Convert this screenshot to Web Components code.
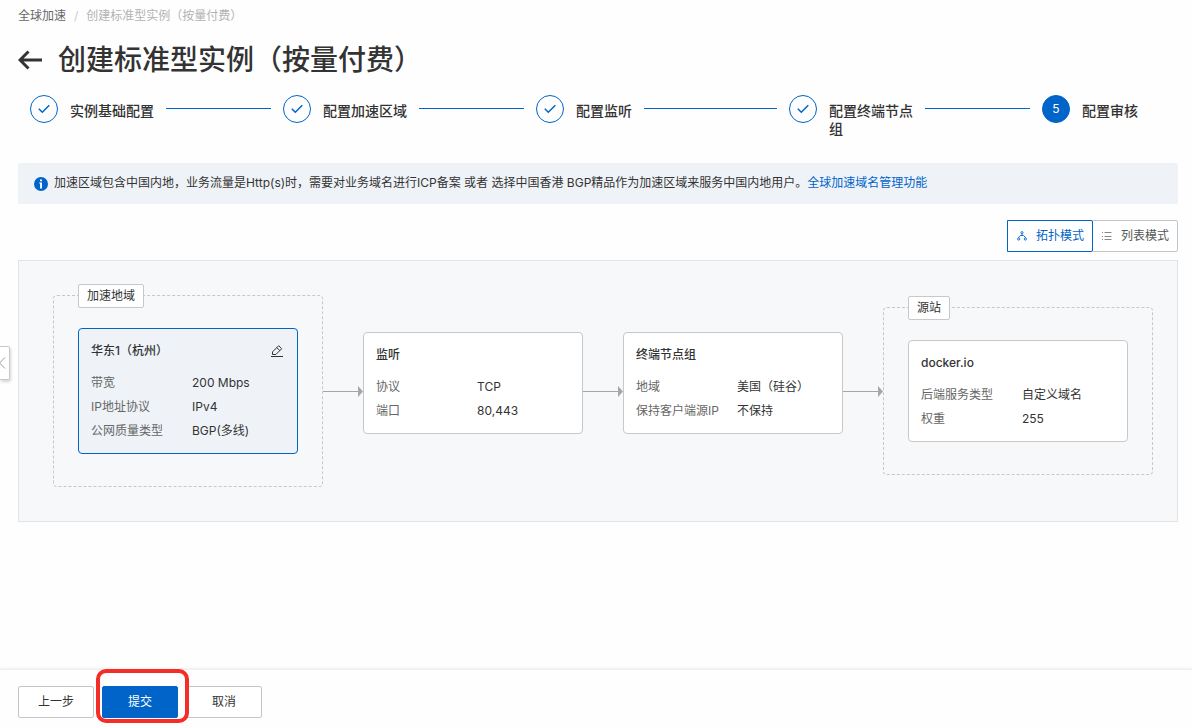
<!DOCTYPE html>
<html lang="zh-CN">
<head>
<meta charset="utf-8">
<meta name="viewport" content="width=device-width, initial-scale=1">
<title>创建标准型实例（按量付费）</title>
<style>
    body {
        margin: 0;
        background: #fefefe;
        color: #333;
        font: 12px/20px Inter, "Noto Sans CJK SC", sans-serif;
    }
</style>
</head>
<body>
<ga-page>
    <ga-breadcrumb slot="header" parent="全球加速" current="创建标准型实例（按量付费）"></ga-breadcrumb>
    <ga-title slot="header">创建标准型实例（按量付费）</ga-title>

    <ga-steps>
        <ga-step state="done">实例基础配置</ga-step>
        <ga-step state="done">配置加速区域</ga-step>
        <ga-step state="done">配置监听</ga-step>
        <ga-step state="done">配置终端节点组</ga-step>
        <ga-step state="current" number="5">配置审核</ga-step>
    </ga-steps>

    <ga-notice href="#domains" link="全球加速域名管理功能">加速区域包含中国内地，业务流量是Http(s)时，需要对业务域名进行ICP备案 或者 选择中国香港 BGP精品作为加速区域来服务中国内地用户。</ga-notice>

    <ga-mode-switch></ga-mode-switch>

    <ga-topology>
        <ga-group label="加速地域">
            <ga-card heading="华东1（杭州）" selected editable>
                <ga-field label="带宽">200 Mbps</ga-field>
                <ga-field label="IP地址协议">IPv4</ga-field>
                <ga-field label="公网质量类型">BGP(多线)</ga-field>
            </ga-card>
        </ga-group>
        <ga-arrow></ga-arrow>
        <ga-card class="node" heading="监听">
            <ga-field label="协议">TCP</ga-field>
            <ga-field label="端口">80,443</ga-field>
        </ga-card>
        <ga-arrow></ga-arrow>
        <ga-card class="node" heading="终端节点组">
            <ga-field label="地域">美国（硅谷）</ga-field>
            <ga-field label="保持客户端源IP">不保持</ga-field>
        </ga-card>
        <ga-arrow></ga-arrow>
        <ga-group label="源站">
            <ga-card heading="docker.io">
                <ga-field label="后端服务类型">自定义域名</ga-field>
                <ga-field label="权重">255</ga-field>
            </ga-card>
        </ga-group>
    </ga-topology>

    <ga-button slot="footer">上一步</ga-button>
    <ga-button slot="footer" primary marked>提交</ga-button>
    <ga-button slot="footer">取消</ga-button>
</ga-page>
<ga-drawer-handle></ga-drawer-handle>

<script>
// attaches an open shadow root filled from a html string
class GaElement extends HTMLElement {
    constructor() {
        super();
        const template = document.createElement('template');
        template.innerHTML = this.constructor.html;
        this._root = this.attachShadow({mode: 'open'});
        this._root.appendChild(template.content.cloneNode(true));
    }

    $(selector) {
        return this._root.querySelector(selector);
    }
}

class GaPage extends GaElement {
    static html = `
        <style>
            :host {
                display: flex;
                flex-direction: column;
                min-height: 100vh;
            }
            header, main { padding: 0 14px 0 18px; }
            header { padding-top: 6px; }
            main { flex: 1; padding-bottom: 24px; }
            footer {
                position: sticky;
                bottom: 0;
                display: flex;
                gap: 8px;
                padding: 16px 18px 10px;
                background: #fefefe;
                border-top: 1px solid #eee;
                box-shadow: 0 -1px 2px rgba(0, 0, 0, .06);
            }
        </style>
        <header><slot name="header"></slot></header>
        <main><slot></slot></main>
        <footer><slot name="footer"></slot></footer>
    `;
}

class GaBreadcrumb extends GaElement {
    static html = `
        <style>
            :host { display: block; }
            nav { display: flex; gap: 8px; color: #b3b3b3; }
            a { color: #666; text-decoration: none; }
            .sep { color: #ccc; }
        </style>
        <nav aria-label="breadcrumb">
            <a href="#home"></a><span class="sep">/</span><span class="current"></span>
        </nav>
    `;

    connectedCallback() {
        this.$('a').textContent = this.getAttribute('parent');
        this.$('.current').textContent = this.getAttribute('current');
    }
}

class GaTitle extends GaElement {
    static html = `
        <style>
            :host {
                display: flex;
                align-items: center;
                gap: 16px;
                padding: 14px 0 15px;
            }
            a { display: flex; color: #333; }
            h1 { margin: 0; font-size: 28px; line-height: 40px; font-weight: 500; }
        </style>
        <a href="#back" aria-label="返回">
            <svg width="24" height="20" viewBox="0 0 24 20" fill="none" stroke="currentColor" stroke-width="3">
                <path d="M2 10H24M10.500 1.500L2 10L10.500 18.500"/>
            </svg>
        </a>
        <h1><slot></slot></h1>
    `;
}

class GaSteps extends GaElement {
    static html = `
        <style>
            :host { display: flex; padding: 0 12px; }
        </style>
        <slot></slot>
    `;
}

class GaStep extends GaElement {
    static html = `
        <style>
            :host { display: flex; flex: 1; align-items: flex-start; gap: 12px; }
            :host([state=current]) { flex: 0 0 124px; }
            :host([state=current]) .line { display: none; }
            .dot {
                box-sizing: border-box;
                flex: none;
                display: flex;
                align-items: center;
                justify-content: center;
                width: 28px;
                height: 28px;
                border: 1px solid #0064c8;
                border-radius: 50%;
                color: #0064c8;
            }
            :host([state=current]) .dot { background: #0064c8; color: #fff; }
            .label {
                max-width: 84px;
                padding-top: 7px;
                font-size: 14px;
                line-height: 18px;
                font-weight: 500;
            }
            .line {
                flex: 1;
                height: 1px;
                margin: 13px 12px 0 0;
                background: #0064c8;
            }
        </style>
        <span class="dot"></span>
        <span class="label"><slot></slot></span>
        <span class="line"></span>
    `;

    connectedCallback() {
        const number = this.getAttribute('number');
        this.$('.dot').innerHTML = number || `
            <svg width="12" height="10" viewBox="0 0 12 10" fill="none" stroke="currentColor" stroke-width="1.500">
                <path d="M.8 4.800L4.300 8.300L11.300 1.300"/>
            </svg>
        `;
    }
}

class GaNotice extends GaElement {
    static html = `
        <style>
            :host {
                display: flex;
                align-items: flex-start;
                gap: 6px;
                margin-top: 25px;
                padding: 10px 16px 11px;
                background: #eff3f8;
                border-radius: 2px;
            }
            svg { flex: none; margin-top: 4px; }
            a { color: #0064c8; text-decoration: none; }
        </style>
        <svg width="14" height="14" viewBox="0 0 14 14">
            <circle cx="7" cy="7" r="7" fill="#0064c8"/>
            <path d="M6 2.500H8V4.300H6ZM5.200 5.500H8V11.500H6.100V6.500H5.200Z" fill="#fff"/>
        </svg>
        <span><slot></slot><a></a></span>
    `;

    connectedCallback() {
        const link = this.$('a');
        link.href = this.getAttribute('href');
        link.textContent = this.getAttribute('link');
    }
}

class GaModeSwitch extends GaElement {
    static html = `
        <style>
            :host { display: flex; justify-content: flex-end; margin: 16px 0 8px; }
            button {
                display: flex;
                align-items: center;
                gap: 8px;
                height: 32px;
                padding: 0 8px;
                border: 1px solid #c0c6cc;
                border-radius: 0 2px 2px 0;
                background: #fff;
                color: #555;
                font: inherit;
                cursor: pointer;
            }
            button:first-child { border-radius: 2px 0 0 2px; }
            button + button { margin-left: -1px; }
            button[aria-pressed=true] {
                position: relative;
                border-color: #0064c8;
                color: #0064c8;
            }
        </style>
        <button type="button" aria-pressed="true">
            <svg width="12" height="12" viewBox="0 0 12 12" fill="none" stroke="currentColor" stroke-width=".9">
                <circle cx="6" cy="2.700" r="1.100"/>
                <circle cx="2.700" cy="9" r="1.100"/>
                <circle cx="9.300" cy="9" r="1.100"/>
                <path d="M6 3.800V5.500M2.700 7.900V7.200L4.300 5.500H7.700L9.300 7.200V7.900"/>
            </svg>
            拓扑模式
        </button>
        <button type="button" aria-pressed="false">
            <svg width="12" height="12" viewBox="0 0 12 12" fill="none" stroke="#888">
                <path d="M1 2.500H2M3.500 2.500H10.500M1 6.500H2M3.500 6.500H10.500M1 9.500H2M3.500 9.500H10.500"/>
            </svg>
            列表模式
        </button>
    `;

    connectedCallback() {
        const buttons = this._root.querySelectorAll('button');
        buttons.forEach(button => button.addEventListener('click', () => {
            buttons.forEach(b => b.setAttribute('aria-pressed', b === button));
        }));
    }
}

class GaTopology extends GaElement {
    static html = `
        <style>
            :host {
                display: flex;
                align-items: center;
                padding: 34px 24px 34px 34px;
                border: 1px solid #e3e4e6;
                background: #f7f8fa;
            }
            /* plain nodes sit a little above the arrows */
            ::slotted(.node) { margin-bottom: 16px; }
        </style>
        <slot></slot>
    `;
}

class GaGroup extends GaElement {
    static html = `
        <style>
            :host {
                position: relative;
                flex: none;
                padding: 32px 24px;
                border: 1px dashed #c8c8c8;
                border-radius: 4px;
            }
            .tag {
                position: absolute;
                top: -12px;
                left: 24px;
                padding: 1px 8px;
                border: 1px solid #c8c8c8;
                border-radius: 2px;
                background: #fff;
            }
        </style>
        <span class="tag"></span>
        <slot></slot>
    `;

    connectedCallback() {
        this.$('.tag').textContent = this.getAttribute('label');
    }
}

class GaCard extends GaElement {
    static html = `
        <style>
            :host {
                box-sizing: border-box;
                display: block;
                flex: none;
                width: 220px;
                padding: 12px 12px 10px;
                border: 1px solid #c8c8c8;
                border-radius: 4px;
                background: #fff;
            }
            :host([selected]) { border-color: #0064c8; background: #eff3f8; }
            .head {
                display: flex;
                justify-content: space-between;
                align-items: center;
                margin-bottom: 10px;
            }
            h2 { margin: 0; font-size: 12px; line-height: 20px; font-weight: 500; }
            button {
                display: flex;
                padding: 0 2px 0 0;
                border: 0;
                background: none;
                color: #333;
                cursor: pointer;
            }
            :host(:not([editable])) button { display: none; }
        </style>
        <div class="head">
            <h2></h2>
            <button type="button" aria-label="编辑">
                <svg width="12" height="12" viewBox="0 0 12 12" fill="none" stroke="currentColor">
                    <path d="M0 11.500H12M1.500 9.500V6.900L7.700 .7L10.700 3.700L4.900 9.500ZM5.800 2.600L8.800 5.600"/>
                </svg>
            </button>
        </div>
        <slot></slot>
    `;

    connectedCallback() {
        this.$('h2').textContent = this.getAttribute('heading');
    }
}

class GaField extends GaElement {
    static html = `
        <style>
            :host { display: block; }
            dl { display: flex; margin: 0; line-height: 24px; }
            dt { flex: none; width: 101px; color: #666; }
            dd { margin: 0; }
        </style>
        <dl><dt></dt><dd><slot></slot></dd></dl>
    `;

    connectedCallback() {
        this.$('dt').textContent = this.getAttribute('label');
    }
}

class GaArrow extends GaElement {
    static html = `
        <style>
            :host {
                display: flex;
                align-items: center;
                flex: 1;
                min-width: 24px;
            }
            .line { flex: 1; height: 1px; background: #a6a6a6; }
            svg { flex: none; }
        </style>
        <span class="line"></span>
        <svg width="5" height="11" viewBox="0 0 5 11"><path d="M0 0L5 5.500L0 11Z" fill="#a6a6a6"/></svg>
    `;
}

class GaButton extends GaElement {
    static html = `
        <style>
            :host { position: relative; display: block; }
            button {
                min-width: 76px;
                height: 32px;
                padding: 0 16px;
                border: 1px solid #c0c6cc;
                border-radius: 2px;
                background: #fff;
                color: #333;
                font: inherit;
                cursor: pointer;
            }
            :host([primary]) button {
                border-color: #0064c8;
                background: #0064c8;
                color: #fff;
            }
            /* red frame drawn round the button, over its neighbours */
            :host([marked]) { z-index: 1; }
            :host([marked])::after {
                content: "";
                position: absolute;
                inset: -17px -11px -5px -6px;
                border: 4px solid #f52d28;
                border-radius: 10px;
                pointer-events: none;
            }
        </style>
        <button type="button"><slot></slot></button>
    `;
}

class GaDrawerHandle extends GaElement {
    static html = `
        <style>
            :host {
                position: fixed;
                left: 0;
                top: calc(50% - 18px);
            }
            button {
                display: flex;
                align-items: center;
                width: 10px;
                height: 34px;
                padding: 0;
                border: 1px solid #c8c8c8;
                border-left: 0;
                border-radius: 0 2px 2px 0;
                background: #fff;
                box-shadow: 1px 2px 3px rgba(0, 0, 0, .16);
                cursor: pointer;
            }
        </style>
        <button type="button" aria-label="展开">
            <svg width="6" height="12" viewBox="0 0 6 12" fill="none" stroke="#999"><path d="M5 .5L-.5 6L5 11.500"/></svg>
        </button>
    `;
}

customElements.define('ga-page', GaPage);
customElements.define('ga-breadcrumb', GaBreadcrumb);
customElements.define('ga-title', GaTitle);
customElements.define('ga-steps', GaSteps);
customElements.define('ga-step', GaStep);
customElements.define('ga-notice', GaNotice);
customElements.define('ga-mode-switch', GaModeSwitch);
customElements.define('ga-topology', GaTopology);
customElements.define('ga-group', GaGroup);
customElements.define('ga-card', GaCard);
customElements.define('ga-field', GaField);
customElements.define('ga-arrow', GaArrow);
customElements.define('ga-button', GaButton);
customElements.define('ga-drawer-handle', GaDrawerHandle);
</script>
</body>
</html>
